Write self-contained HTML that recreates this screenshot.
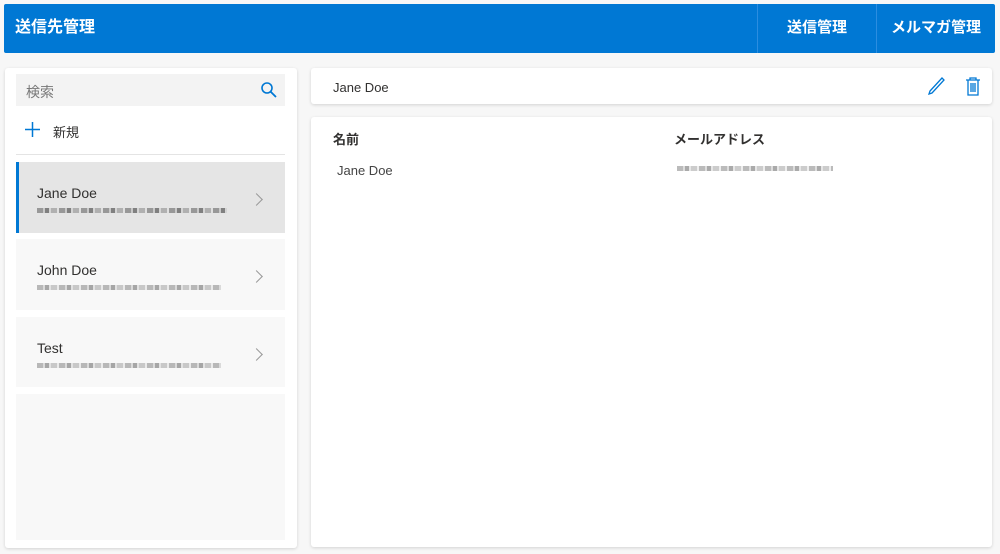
<!DOCTYPE html>
<html><head><meta charset="utf-8"><style>
*{box-sizing:border-box;margin:0;padding:0}
body{width:1000px;height:554px;background:#f7f7f7;font-family:"Liberation Sans","Noto Sans CJK JP",sans-serif;position:relative;overflow:hidden;color:#323130}
.abs{position:absolute}
.hdr{left:4px;top:4px;width:991px;height:49px;background:#0078d4;border-radius:2px;color:#fff;font-weight:bold}
.hdr .t{position:absolute;left:11px;top:13px;font-size:16px;line-height:22px}
.hdr .n{position:absolute;top:0;height:49px;line-height:47px;font-size:15px;text-align:center;border-left:1px solid #2b8de0}
.panel{background:#fff;border-radius:3px;box-shadow:0 1px 3px rgba(0,0,0,.15)}
.card{left:16px;width:269px;background:#f8f8f8}
.card .nm{position:absolute;left:21px;top:23px;font-size:14px;color:#323130}
.blur{position:absolute;left:21px;height:5px;background:repeating-linear-gradient(90deg,#777 0 6px,#bbb 6px 8px,#555 8px 12px,#ccc 12px 14px,#999 14px 20px,#ddd 20px 22px);opacity:.7}
.chev{position:absolute;right:24px;top:33px;width:9px;height:9px;border-right:1.3px solid #999;border-top:1.3px solid #999;transform:rotate(45deg)}
</style></head><body>
<div class="abs hdr"><div class="t">送信先管理</div>
<div class="n" style="left:753px;width:119px">送信管理</div>
<div class="n" style="left:872px;width:119px">メルマガ管理</div></div>

<div class="abs panel" style="left:5px;top:68px;width:292px;height:480px"></div>
<div class="abs" style="left:16px;top:74px;width:269px;height:32px;background:#f3f3f3"></div>
<div class="abs" style="left:26px;top:82px;font-size:14px;color:#777">検索</div>
<svg class="abs" style="left:260px;top:81px" width="18" height="18" viewBox="0 0 18 18"><circle cx="7" cy="7" r="5" fill="none" stroke="#0078d4" stroke-width="1.6"/><path d="M10.7 10.7L16 16" stroke="#0078d4" stroke-width="1.8"/></svg>
<svg class="abs" style="left:25px;top:122px" width="15" height="15"><path d="M7.5 0V15M0 7.5H15" stroke="#0078d4" stroke-width="1.5"/></svg>
<div class="abs" style="left:53px;top:122px;font-size:13px">新規</div>
<div class="abs" style="left:16px;top:154px;width:269px;height:1px;background:#e4e4e4"></div>

<div class="abs card" style="top:162px;height:71px;background:#e5e5e5;border-left:3px solid #0078d4"><div class="nm" style="left:18px">Jane Doe</div><div class="blur" style="left:18px;top:46px;width:190px"></div><div class="chev"></div></div>
<div class="abs card" style="top:239px;height:71px"><div class="nm">John Doe</div><div class="blur" style="top:46px;width:184px;opacity:.5"></div><div class="chev"></div></div>
<div class="abs card" style="top:317px;height:70px"><div class="nm">Test</div><div class="blur" style="top:46px;width:184px;opacity:.5"></div><div class="chev"></div></div>
<div class="abs card" style="top:394px;height:146px"></div>

<div class="abs panel" style="left:311px;top:68px;width:681px;height:36px"></div>
<div class="abs" style="left:333px;top:80px;font-size:13px">Jane Doe</div>
<svg class="abs" style="left:927px;top:76px" width="19" height="20" viewBox="0 0 19 20"><path d="M2 18L3 15L15 2L17 4L5 17Z" fill="none" stroke="#0078d4" stroke-width="1.3"/></svg>
<svg class="abs" style="left:965px;top:77px" width="16" height="19" viewBox="0 0 16 19"><path d="M1 3H15M5 3V1H11V3M3 3V18H13V3M6 6V15M8 6V15M10 6V15" fill="none" stroke="#0078d4" stroke-width="1.3"/></svg>

<div class="abs panel" style="left:311px;top:117px;width:681px;height:430px"></div>
<div class="abs" style="left:333px;top:129px;font-size:13px;font-weight:bold">名前</div>
<div class="abs" style="left:674px;top:129px;font-size:13px;font-weight:bold">メールアドレス</div>
<div class="abs" style="left:337px;top:163px;font-size:13px;color:#444">Jane Doe</div>
<div class="blur" style="left:677px;top:166px;width:156px;opacity:.5"></div>
</body></html>
